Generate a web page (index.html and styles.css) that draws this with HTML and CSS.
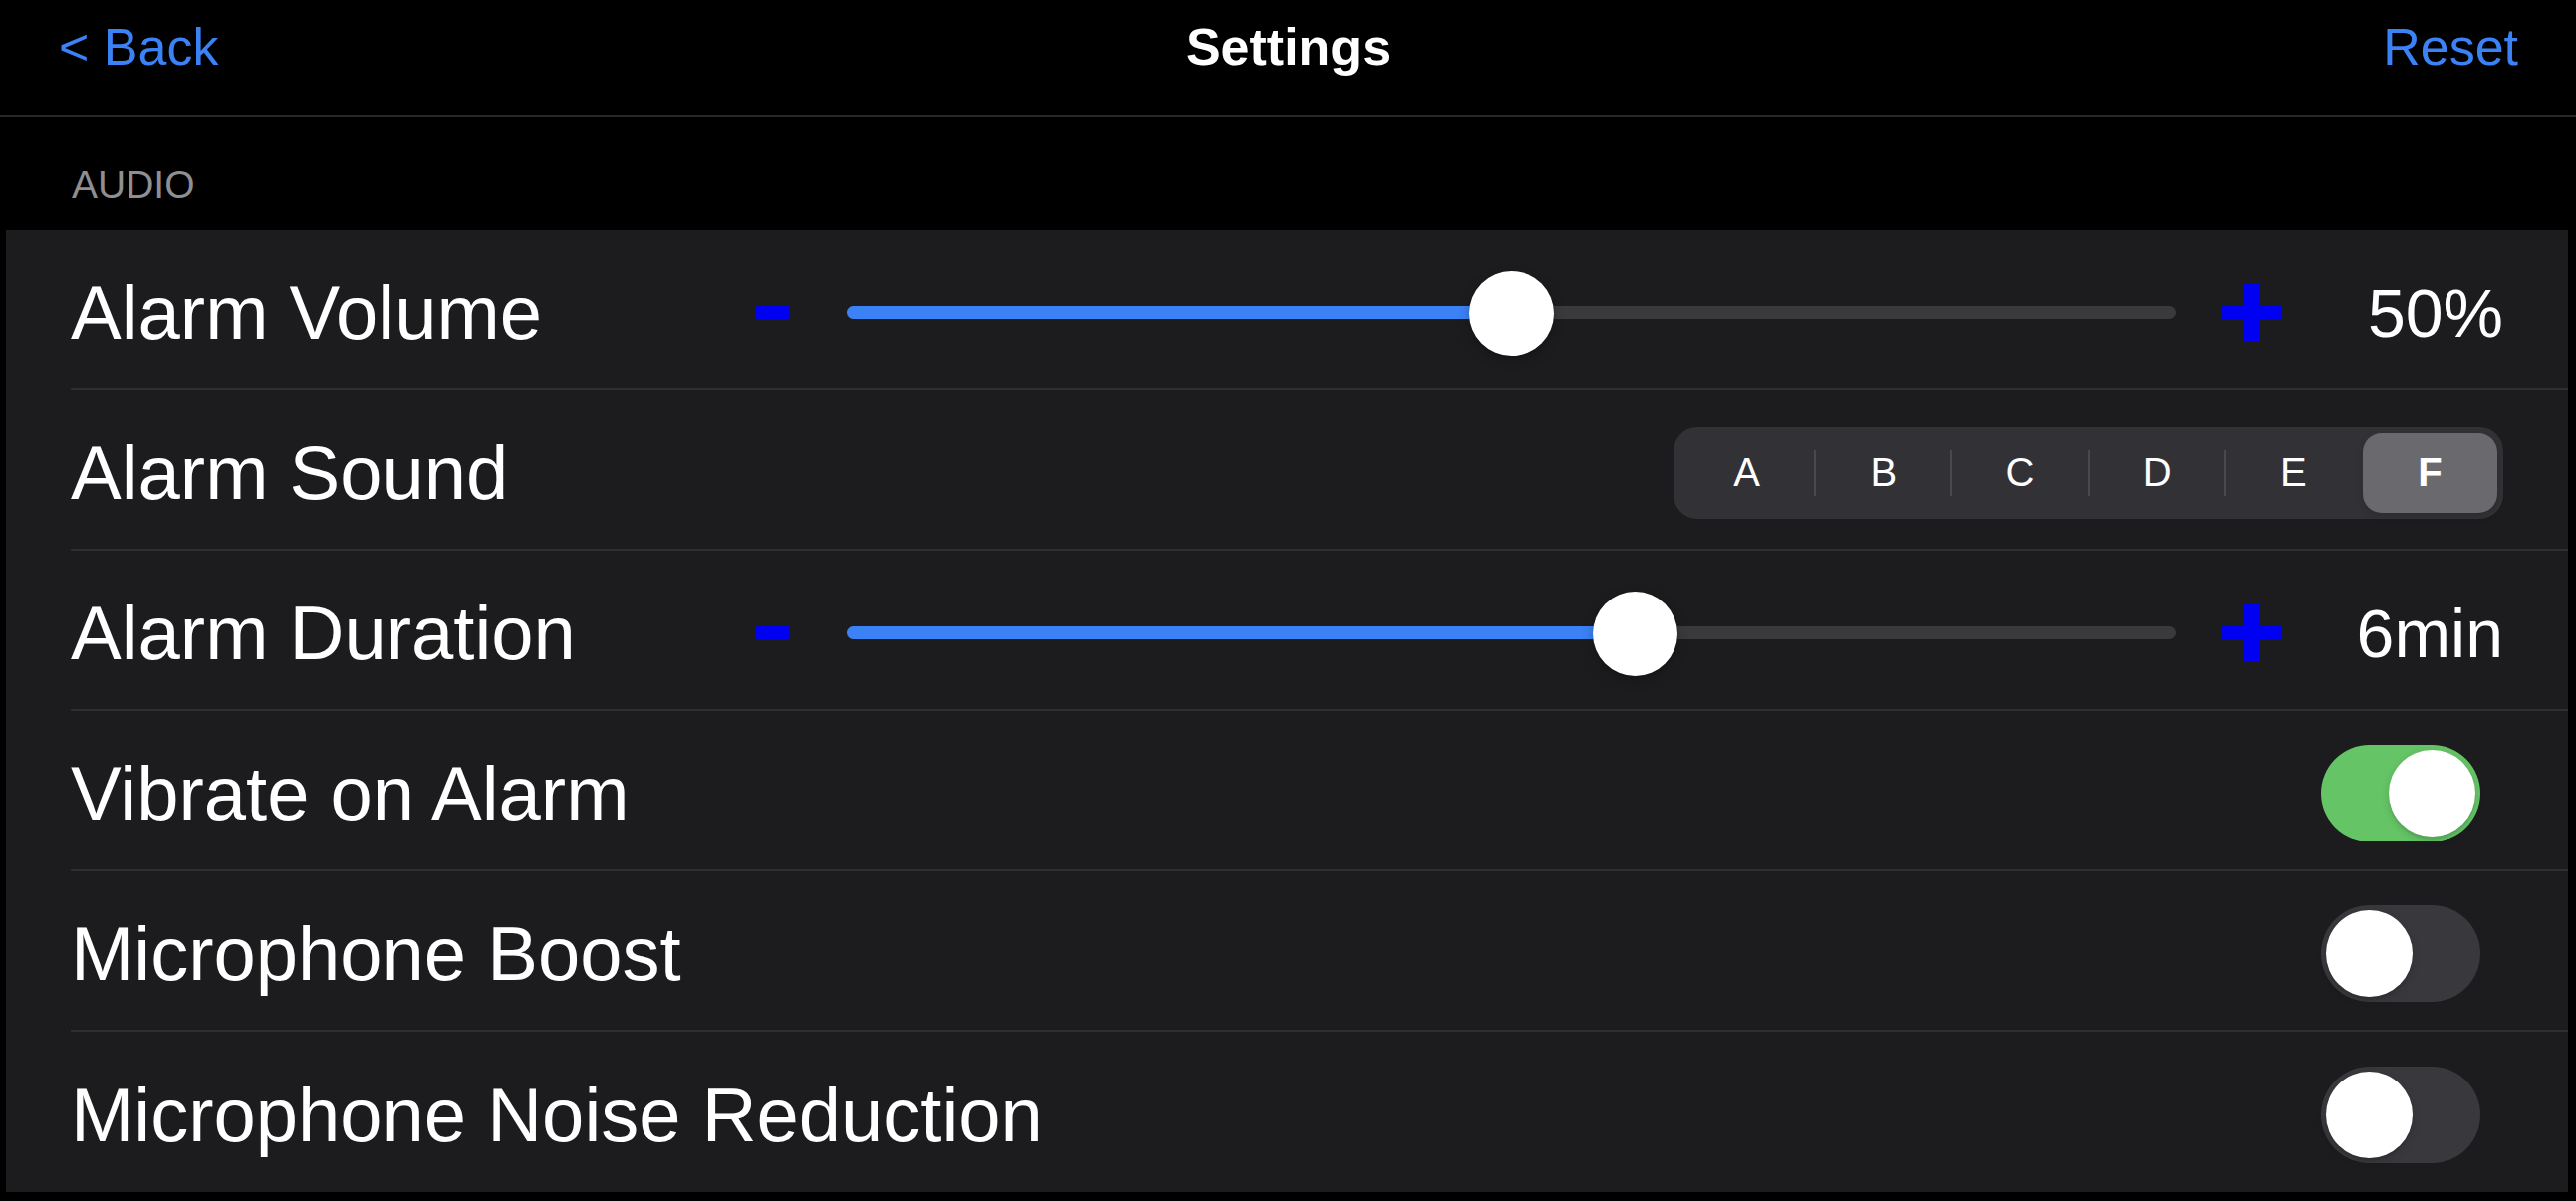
FILE: index.html
```html
<!DOCTYPE html>
<html lang="en">
<head>
    <meta charset="UTF-8">
    <title>Settings</title>
    <link rel="stylesheet" href="styles.css">
</head>
<body>
    <div class="navbar">
        <a class="nav-btn" href="#">&lt; Back</a>
        <div class="nav-title">Settings</div>
        <a class="nav-btn reset" href="#">Reset</a>
    </div>

    <div class="section-header">AUDIO</div>

    <div class="group">
        <div class="row">
            <div class="row-body">
                <span class="label">Alarm Volume</span>
                <div class="slider">
                    <span class="step-minus"></span>
                    <div class="track" style="--v: 0.5">
                        <div class="fill"></div>
                        <div class="thumb"></div>
                    </div>
                    <svg class="step-plus" viewBox="0 0 59 57"><rect x="0" y="21" width="59" height="15"/><rect x="21" y="0" width="17" height="57"/></svg>
                    <span class="value">50%</span>
                </div>
            </div>
        </div>

        <div class="row">
            <div class="row-body">
                <span class="label">Alarm Sound</span>
                <div class="segmented">
                    <span class="seg">A</span>
                    <span class="seg-div"></span>
                    <span class="seg">B</span>
                    <span class="seg-div"></span>
                    <span class="seg">C</span>
                    <span class="seg-div"></span>
                    <span class="seg">D</span>
                    <span class="seg-div"></span>
                    <span class="seg">E</span>
                    <span class="seg-div hidden"></span>
                    <span class="seg selected">F</span>
                </div>
            </div>
        </div>

        <div class="row">
            <div class="row-body">
                <span class="label">Alarm Duration</span>
                <div class="slider">
                    <span class="step-minus"></span>
                    <div class="track" style="--v: 0.6">
                        <div class="fill"></div>
                        <div class="thumb"></div>
                    </div>
                    <svg class="step-plus" viewBox="0 0 59 57"><rect x="0" y="21" width="59" height="15"/><rect x="21" y="0" width="17" height="57"/></svg>
                    <span class="value">6min</span>
                </div>
            </div>
        </div>

        <div class="row">
            <div class="row-body">
                <span class="label">Vibrate on Alarm</span>
                <div class="switch on"><span class="knob"></span></div>
            </div>
        </div>

        <div class="row">
            <div class="row-body">
                <span class="label">Microphone Boost</span>
                <div class="switch"><span class="knob"></span></div>
            </div>
        </div>

        <div class="row">
            <div class="row-body">
                <span class="label">Microphone Noise Reduction</span>
                <div class="switch"><span class="knob"></span></div>
            </div>
        </div>
    </div>
</body>
</html>
```

FILE: styles.css
```css
body {
    margin: 0;
    background: #000;
    color: #fff;
    font-family: "Liberation Sans", Arial, sans-serif;
    width: 2586px;
    height: 1206px;
    overflow: hidden;
}
.navbar {
    display: grid;
    grid-template-columns: 1fr auto 1fr;
    height: 117px;
    box-sizing: border-box;
    padding: 18px 58px 0 59px;
    border-bottom: 2px solid #262628;
    font-size: 52px;
    line-height: 58px;
}
.nav-btn {
    color: #3b82f6;
    text-decoration: none;
}
.nav-btn.reset {
    justify-self: end;
}
.nav-title {
    font-weight: bold;
}
.section-header {
    height: 114px;
    box-sizing: border-box;
    padding: 46px 0 0 72px;
    font-size: 39px;
    line-height: 45px;
    color: #8e8e93;
}
.group {
    background: #1c1c1e;
    margin: 0 8px 0 6px;
}
.row {
    display: flex;
    height: 161px;
    box-sizing: border-box;
    padding-left: 65px;
}
.row-body {
    flex: 1;
    display: flex;
    align-items: center;
    padding: 6px 65px 0 0;
    border-bottom: 2px solid #2e2e31;
}
.row:last-child .row-body {
    border-bottom: none;
}
.label {
    font-size: 76px;
    white-space: nowrap;
}
.slider {
    display: flex;
    align-items: center;
    width: 1754px;
    margin-left: auto;
}
.step-minus {
    width: 33px;
    height: 15px;
    border-radius: 2px;
    background: #0000f2;
    margin-right: 58px;
}
.step-plus {
    width: 59px;
    height: 57px;
    margin-left: 47px;
    fill: #0000f2;
}
.track {
    position: relative;
    flex: 1;
    height: 13px;
    border-radius: 7px;
    background: #3a3a3c;
}
.fill {
    height: 100%;
    border-radius: 7px;
    background: #3b82f6;
    width: calc(var(--v) * (100% - 85px) + 42px);
}
.thumb {
    position: absolute;
    top: 50%;
    left: calc(var(--v) * (100% - 85px));
    width: 85px;
    height: 85px;
    margin-top: -42px;
    border-radius: 50%;
    background: #fff;
    box-shadow: 0 4px 12px rgba(0, 0, 0, 0.25), 0 1px 2px rgba(0, 0, 0, 0.1);
}
.value {
    width: 223px;
    text-align: right;
    font-size: 68px;
}
.segmented {
    margin-left: auto;
    display: flex;
    align-items: center;
    width: 833px;
    height: 92px;
    box-sizing: border-box;
    padding: 6px;
    border-radius: 24px;
    background: #323236;
}
.seg {
    flex: 1;
    height: 100%;
    display: flex;
    align-items: center;
    justify-content: center;
    font-size: 40px;
    border-radius: 19px;
}
.seg.selected {
    background: #6a696e;
    font-weight: bold;
    box-shadow: 0 3px 8px rgba(0, 0, 0, 0.12);
}
.seg-div {
    width: 2px;
    height: 46px;
    background: #4a4a4e;
}
.seg-div.hidden {
    background: transparent;
}
.switch {
    margin-left: auto;
    margin-right: 23px;
    display: flex;
    align-items: center;
    width: 160px;
    height: 97px;
    box-sizing: border-box;
    padding: 0 5px;
    border-radius: 49px;
    background: #39393d;
}
.switch.on {
    background: #65c466;
    justify-content: flex-end;
}
.knob {
    width: 87px;
    height: 87px;
    border-radius: 50%;
    background: #fff;
    box-shadow: 0 3px 8px rgba(0, 0, 0, 0.15), 0 3px 1px rgba(0, 0, 0, 0.06);
}
```
